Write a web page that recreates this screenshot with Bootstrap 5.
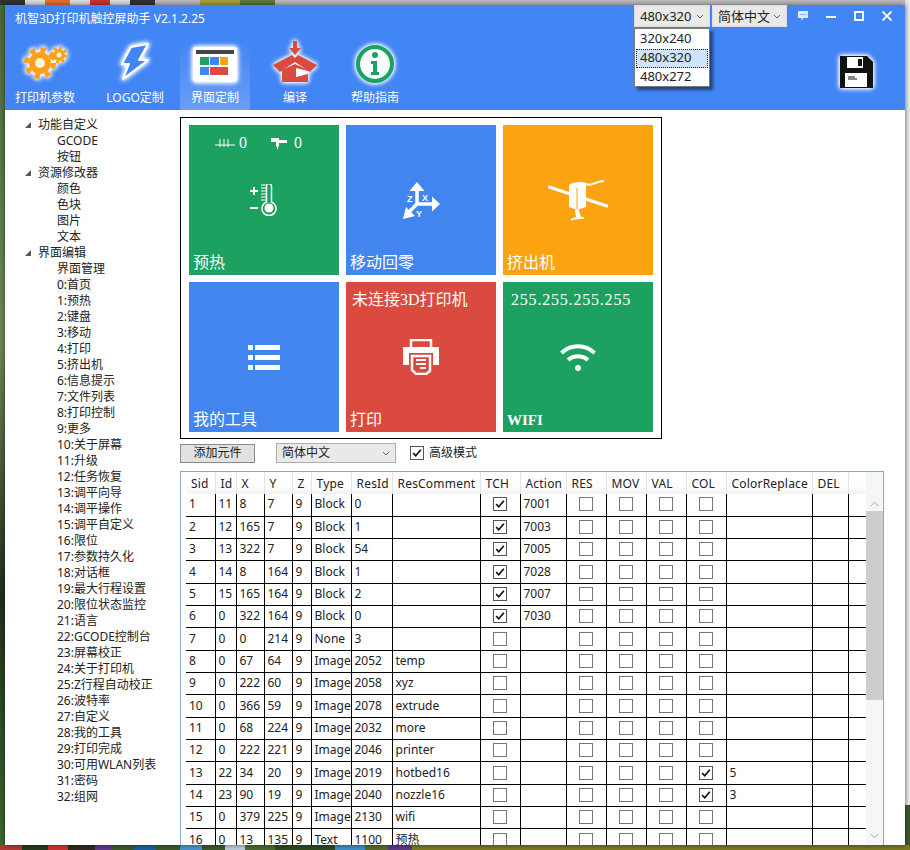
<!DOCTYPE html>
<html lang="en">
<head>
  <meta charset="UTF-8">
  <meta name="viewport" content="width=device-width, initial-scale=1">
  <title>机智3D打印机触控屏助手</title>
  <link href="https://cdn.jsdelivr.net/npm/bootstrap@5.3.2/dist/css/bootstrap.min.css" rel="stylesheet">
  <style>
    html, body { height: 850px; overflow: hidden; }
    body {
      margin: 0;
      padding: 5px;
      font-family: "Noto Sans", "Noto Sans CJK SC", sans-serif;
      font-size: 12px;
      line-height: 16px;
      color: #222;
      background-color: #3d5a2c;
      background-image:
        linear-gradient(90deg, #ddd, #eee),
        linear-gradient(90deg, #333 0 25px, #ddd 25px 45px, #e8702a 45px 70px, #ddd 70px 90px, #c33 90px 110px, #ddd 110px 130px, #333 130px 155px, #bbb 155px 200px, #a9a13c 200px 240px, #5b7a3a 240px 275px, #bbb 275px 910px),
        linear-gradient(90deg, #b03a33 0 22px, #233b1c 22px 48px, #c33 48px 68px, #32281f 68px 95px, #5d3a86 95px 112px, #3c5a2a 112px 134px, #1c5fa0 134px 156px, #3c5a2a 156px 180px, #4b93cf 180px 202px, #3a5a2a 202px 225px, #bcd 225px 245px, #4a6a30 245px 275px, #2d4a22 275px 335px, #3c90c8 335px 365px, #5a6a28 365px 388px, #5d3a86 388px 412px, #7a7a20 412px 910px),
        linear-gradient(180deg, #4a6a3a, #6f8a55 40%, #20301c 70%, #3d6a30);
      background-size: 5px 805px, 910px 5px, 910px 5px, 5px 850px;
      background-position: 905px 0, 0 0, 0 845px, 0 0;
      background-repeat: no-repeat;
    }
    .app-window {
      width: 900px;
      height: 840px;
      background: #fff;
      box-shadow: 0 0 5px rgba(0, 0, 0, .55);
    }
    .app-head { height: 105px; background: #4285f4; color: #fff; }
    .title-row { height: 35px; padding-left: 10px; }
    .app-title { font-size: 12px; margin-top: -8px; }
    .combo-btn {
      height: 22px;
      background: #e9e9e9;
      color: #222;
      border: 1px solid #dcdcdc;
      padding: 0 5px;
      font-size: 13px;
      line-height: 19px;
      position: relative;
    }
    .combo-res { width: 76px; margin-right: 2px; }
    .combo-lang { width: 75px; }
    .combo-caret { width: 8px; height: 5px; flex: none; }
    .win-btn { width: 28px; height: 22px; }
    .win-first { margin-left: 2px; }
    .res-menu.dropdown-menu {
      position: absolute;
      top: 22px;
      left: -1px;
      width: 76px;
      min-width: 0;
      height: 59px;
      padding: 1px;
      margin: 0;
      border: 1px solid #7a7a7a;
      border-radius: 0;
      font-size: 13px;
      box-shadow: 3px 3px 3px rgba(0, 0, 0, .5);
      z-index: 5;
    }
    .res-menu .dropdown-item { padding: 0 4px; height: 19px; line-height: 17px; color: #222; }
    .res-menu .dropdown-item.active {
      background: #cfe3fb;
      outline: 1px dotted #123;
      outline-offset: -1px;
    }
    .tool-row { height: 70px; }
    .tool-item { width: 80px; height: 70px; color: #fff; }
    .tool-item svg { width: 60px; height: 49px; flex: none; margin-bottom: 1px; }
    .tool-item span { line-height: 16px; }
    .tool-gap-a { margin-left: 10px; }
    .tool-gap-b { margin-left: 5px; }
    .tool-active { width: 70px; background: linear-gradient(180deg, #4285f4 0, #6a9df7 100%); }
    .tool-glow { filter: drop-shadow(0 0 2px #fff) drop-shadow(0 0 2px #fff); }
    .tool-save { width: 38px; height: 38px; margin: 13px 30px 0 auto; }

    .tree-col { width: 175px; padding-top: 7px; flex: none; }
    .tree-row { height: 16px; white-space: nowrap; position: relative; }
    .tree-top { padding-left: 33px; }
    .tree-top::before {
      content: "";
      position: absolute;
      left: 20px;
      top: 5px;
      border-style: solid;
      border-width: 0 0 6px 6px;
      border-color: transparent transparent #555 transparent;
    }
    .tree-sub { padding-left: 52px; }
    .tree-hover { display: inline-block; background: #f4f4f4; padding-right: 1px; }

    .main-col { width: 725px; padding-top: 7px; }
    .stage-box {
      width: 482px;
      height: 322px;
      border: 1px solid #000;
      padding: 7px 8px;
      display: grid;
      grid-template-columns: repeat(3, 150px);
      grid-template-rows: repeat(2, 150px);
      gap: 7px;
    }
    .stage-tile {
      display: grid;
      grid-template-rows: 36px 1fr 36px;
      color: #fff;
      font-family: "Liberation Serif", "Noto Sans CJK SC", serif;
      font-size: 16px;
      line-height: 16px;
    }
    .tile-green { background: #1ca161; }
    .tile-blue { background: #4285ef; }
    .tile-orange { background: #fca311; }
    .tile-red { background: #da4a3e; }
    .tile-top { padding-left: 6px; }
    .tile-ip { padding-left: 8px; letter-spacing: .8px; }
    .tile-mid { display: flex; align-items: center; justify-content: center; }
    .tile-label { align-self: end; padding: 0 0 4px 4px; }
    .tile-mono { font-size: 15px; font-weight: 700; }
    .tile-temp { padding-left: 26px; }
    .temp-bed { margin-right: 3px; }
    .temp-nozzle { margin: 0 7px 0 24px; }

    .ctrl-row { height: 20px; margin-top: 4px; }
    .add-btn {
      width: 75px;
      height: 19px;
      background: #e1e1e1;
      border: 1px solid #8a8a8a;
      color: #222;
      font-size: 12px;
      line-height: 16px;
      padding: 0;
    }
    .lang-select {
      width: 120px;
      height: 20px;
      margin-left: 21px;
      background: #e9e9e9;
      border: 1px solid #adadad;
      padding: 0 5px;
      font-size: 12px;
    }
    .mode-box { margin-left: 14px; }
    .mode-box span { margin-left: 5px; }
    .wf-check.form-check-input {
      width: 14px;
      height: 14px;
      margin: 0;
      border: 1px solid #777;
      border-radius: 0;
      background-color: #fff;
      flex: none;
      display: block;
    }
    .wf-check.form-check-input:checked {
      background-color: #fff;
      border-color: #555;
      background-image: url("data:image/svg+xml,%3csvg xmlns='http://www.w3.org/2000/svg' viewBox='0 0 14 14'%3e%3cpath fill='none' stroke='%23111' stroke-width='2' d='M2.5 7l3 3.2 6-7'/%3e%3c/svg%3e");
    }

    .grid-box {
      width: 704px;
      height: 374px;
      margin-top: 8px;
      border: 1px solid #8fa6bd;
      border-bottom: 0;
      padding-left: 5px;
      overflow: hidden;
      position: relative;
    }
    .grid-table.table {
      table-layout: fixed;
      width: 680px;
      margin: 0;
      font-size: 12px;
      line-height: 16px;
      color: #222;
    }
    .grid-table th, .grid-table td {
      padding: 0 0 1px 3px;
      white-space: nowrap;
      overflow: hidden;
      border: 0;
      border-right: 1px solid #000;
      border-bottom: 1px solid #000;
      height: 22.33px;
      font-weight: 400;
      vertical-align: middle;
    }
    .grid-table thead th {
      border-right: 1px solid #e4e4e4;
      border-bottom: 0;
      height: 22px;
      padding: 1px 0 0 5px;
      background: linear-gradient(180deg, #fff 60%, #f3f3f3);
      letter-spacing: .2px;
    }
    .grid-table td.cell-check { padding: 0 1px 1px 0; }
    .grid-table td.cell-check input { margin: 0 auto; }
    .grid-scroll {
      position: absolute;
      top: 0;
      right: 0;
      width: 17px;
      height: 100%;
      background: #f5f6f8;
    }
    .scroll-thumb { position: absolute; top: 39px; left: 0; width: 100%; height: 189px; background: #cdcdcd; }
    .scroll-arrow { position: absolute; left: 4px; width: 9px; height: 6px; }
    .arrow-up { top: 29px; }
    .arrow-down { bottom: 6px; }
  </style>
</head>
<body>

  <div class="app-window d-flex flex-column">
    <div class="app-head">
      <div class="title-row d-flex align-items-start">
        <div class="app-title align-self-center">机智3D打印机触控屏助手 V2.1.2.25</div>
        <div class="ms-auto d-flex align-items-center">
          <div class="combo-btn combo-res d-flex align-items-center justify-content-between">
            480x320
            <svg class="combo-caret" viewBox="0 0 8 5"><path d="M1 1l3 3 3-3" fill="none" stroke="#666"/></svg>
            <div class="dropdown-menu show res-menu">
              <a class="dropdown-item" href="#">320x240</a>
              <a class="dropdown-item active" href="#">480x320</a>
              <a class="dropdown-item" href="#">480x272</a>
            </div>
          </div>
          <div class="combo-btn combo-lang d-flex align-items-center justify-content-between">
            简体中文
            <svg class="combo-caret" viewBox="0 0 8 5"><path d="M1 1l3 3 3-3" fill="none" stroke="#666"/></svg>
          </div>
          <div class="win-btn win-first d-flex align-items-center justify-content-center">
            <svg width="12" height="12" viewBox="0 0 12 12"><path d="M1 1h10v7H6.500L4.500 11V8H1z" fill="#dce8fd"/><path d="M3.500 4.500h1M5.500 4.500h1M7.500 4.500h1" stroke="#4285f4"/></svg>
          </div>
          <div class="win-btn d-flex align-items-center justify-content-center">
            <svg width="10" height="10" viewBox="0 0 10 10"><path d="M0 6h10" stroke="#fff" stroke-width="2"/></svg>
          </div>
          <div class="win-btn d-flex align-items-center justify-content-center">
            <svg width="10" height="10" viewBox="0 0 10 10"><rect x="1" y="1" width="8" height="8" fill="none" stroke="#fff" stroke-width="2"/></svg>
          </div>
          <div class="win-btn me-1 d-flex align-items-center justify-content-center">
            <svg width="10" height="10" viewBox="0 0 10 10"><path d="M.5.5l9 9M9.500.5l-9 9" stroke="#fff" stroke-width="1.800"/></svg>
          </div>
        </div>
      </div>

      <div class="tool-row d-flex">
        <div class="tool-item d-flex flex-column align-items-center">
          <svg class="tool-glow" viewBox="0 0 60 49">
            <circle cx="25" cy="23" r="11" fill="#ff9f1a"/>
            <circle cx="25" cy="23" r="13.500" fill="none" stroke="#ff9f1a" stroke-width="5" stroke-dasharray="5.300 5.300"/>
            <circle cx="25" cy="23" r="5" fill="#fff3dc"/>
            <circle cx="44" cy="15" r="6" fill="#ff9f1a"/>
            <circle cx="44" cy="15" r="7" fill="none" stroke="#ff9f1a" stroke-width="3" stroke-dasharray="2.750 2.750"/>
            <circle cx="44" cy="15" r="2.500" fill="#fff3dc"/>
          </svg>
          <span>打印机参数</span>
        </div>
        <div class="tool-item tool-gap-a d-flex flex-column align-items-center">
          <svg class="tool-glow" viewBox="0 0 60 49">
            <path d="M26 7L43 4 34 20h9L18 39l6-15h-7z" fill="#4285f4" stroke="#fff" stroke-width="2" stroke-linejoin="round"/>
          </svg>
          <span>LOGO定制</span>
        </div>
        <div class="tool-item tool-active tool-gap-b d-flex flex-column align-items-center">
          <svg class="tool-glow" viewBox="0 0 60 49">
            <rect x="8" y="7" width="44" height="35" rx="3" fill="#fff"/>
            <rect x="11" y="10" width="38" height="4" fill="#444"/>
            <rect x="15" y="17" width="9" height="8" fill="#1ca161"/>
            <rect x="25" y="17" width="9" height="8" fill="#4285f4"/>
            <rect x="35" y="17" width="8" height="8" fill="#fca311"/>
            <rect x="15" y="27" width="9" height="8" fill="#4285f4"/>
            <rect x="25" y="27" width="18" height="8" fill="#da4a3e"/>
          </svg>
          <span>界面定制</span>
        </div>
        <div class="tool-item tool-gap-b d-flex flex-column align-items-center">
          <svg class="tool-glow" viewBox="0 0 60 49">
            <path d="M28 1h4v7h4l-6 7-6-7h4z" fill="#da4a3e"/>
            <path d="M8 25l19-10 3 3v4L15 32z" fill="#da4a3e"/>
            <path d="M52 25L33 15l-3 3v4l15 10z" fill="#da4a3e"/>
            <path d="M17 30l13-6 13 6v12H17z" fill="#da4a3e"/>
            <path d="M31 28l12 3v3l-12 3z" fill="#fff"/>
          </svg>
          <span>编译</span>
        </div>
        <div class="tool-item d-flex flex-column align-items-center">
          <svg class="tool-glow" viewBox="0 0 60 49">
            <circle cx="30" cy="24" r="17" fill="#fff" stroke="#1ca161" stroke-width="4"/>
            <circle cx="30" cy="15" r="3" fill="#1ca161"/>
            <path d="M26 21h6v11h2v3h-8v-3h2v-8h-2z" fill="#1ca161"/>
          </svg>
          <span>帮助指南</span>
        </div>
        <svg class="tool-save tool-glow" viewBox="0 0 38 38">
          <path d="M3 3h27l6 6v26H3z" fill="#111"/>
          <rect x="10" y="4" width="16" height="11" fill="#fff"/>
          <rect x="21" y="6" width="4" height="7" fill="#111"/>
          <rect x="8" y="20" width="22" height="14" fill="#fff"/>
          <path d="M11 24h7M11 26h9" stroke="#111"/>
        </svg>
      </div>
    </div>

    <div class="d-flex flex-grow-1">
      <div class="tree-col" id="treeList"></div>

      <div class="main-col">
        <div class="stage-box">
          <div class="stage-tile tile-green">
            <div class="tile-temp d-flex align-items-center">
              <svg class="temp-bed" width="21" height="10" viewBox="0 0 21 10"><path d="M0 7h20M5 1v8M9 1v8M13 1v8" stroke="#fff"/></svg>
              <span>0</span>
              <svg class="temp-nozzle" width="16" height="14" viewBox="0 0 16 14"><path d="M0 2h8v2h8v3H8v3l-1 1v2H6v-2L5 10V6H0z" fill="#fff"/></svg>
              <span>0</span>
            </div>
            <div class="tile-mid">
              <svg width="28" height="32" viewBox="0 0 28 32">
                <path d="M0 7h8M4 3v8M0 24h8" stroke="#fff" stroke-width="2"/>
                <path d="M11 1h5M11 4h5M11 7h5M11 10h5M11 13h5M11 16h5" stroke="#fff"/>
                <path d="M16.500 1a2.500 2.500 0 0 1 5 0v16a7 7 0 1 1-5 0z" fill="none" stroke="#fff" stroke-width="1.500" transform="translate(0 1)"/>
                <circle cx="19" cy="24" r="4.500" fill="#fff"/>
              </svg>
            </div>
            <div class="tile-label">预热</div>
          </div>
          <div class="stage-tile tile-blue">
            <div></div>
            <div class="tile-mid">
              <svg width="37" height="37" viewBox="0 0 37 37">
                <path d="M14 22V6M14 22h17M14 22L4 32" stroke="#fff" stroke-width="3.500" fill="none"/>
                <path d="M14 0l7.500 9h-15zM37 22l-8 7.500v-15zM0 37l3-12 9 9z" fill="#fff"/>
                <text x="4" y="20" font-size="9" font-weight="700" fill="#fff" font-family="Liberation Sans">Z</text>
                <text x="19" y="19" font-size="9" font-weight="700" fill="#fff" font-family="Liberation Sans">X</text>
                <text x="13" y="35" font-size="9" font-weight="700" fill="#fff" font-family="Liberation Sans">Y</text>
              </svg>
            </div>
            <div class="tile-label">移动回零</div>
          </div>
          <div class="stage-tile tile-orange">
            <div></div>
            <div class="tile-mid">
              <svg width="60" height="42" viewBox="0 0 60 42">
                <path d="M1 8l58 19" stroke="#fff" stroke-width="3" stroke-linecap="round"/>
                <path d="M21 6c3-3 12-4 17-2v24l-9 3-8-3z" fill="#fff"/>
                <path d="M38 5c6 3 10-3 18-3" stroke="#fff" stroke-width="2" fill="none"/>
                <path d="M27 31h4l1 4 1 3h-5z" fill="#fff"/>
                <path d="M23 41c4-3 9-2 13-2" stroke="#fff" stroke-width="2" fill="none"/>
                <path d="M29 9v21" stroke="#fca311"/>
              </svg>
            </div>
            <div class="tile-label">挤出机</div>
          </div>
          <div class="stage-tile tile-blue">
            <div></div>
            <div class="tile-mid">
              <svg width="32" height="25" viewBox="0 0 32 25" fill="#fff">
                <rect y="0" width="5" height="5"/><rect x="7" y="0" width="25" height="5"/>
                <rect y="10" width="5" height="5"/><rect x="7" y="10" width="25" height="5"/>
                <rect y="20" width="5" height="5"/><rect x="7" y="20" width="25" height="5"/>
              </svg>
            </div>
            <div class="tile-label">我的工具</div>
          </div>
          <div class="stage-tile tile-red">
            <div class="tile-top d-flex align-items-center">未连接3D打印机</div>
            <div class="tile-mid">
              <svg width="36" height="36" viewBox="0 0 36 36">
                <path d="M8 8V1h20v7" fill="none" stroke="#fff" stroke-width="2.500"/>
                <path d="M0 8h36v18h-6V14H6v12H0z" fill="#fff"/>
                <path d="M9 17h18v15l-4 3H13l-4-4z" fill="none" stroke="#fff" stroke-width="2.500"/>
                <path d="M13 21h10M13 25h10M17 29h6" stroke="#fff" stroke-width="2"/>
              </svg>
            </div>
            <div class="tile-label">打印</div>
          </div>
          <div class="stage-tile tile-green">
            <div class="tile-ip d-flex align-items-center">255.255.255.255</div>
            <div class="tile-mid">
              <svg width="36" height="28" viewBox="0 0 36 28" fill="none" stroke="#fff" stroke-width="4">
                <path d="M1.500 10c9-9 24-9 33 0"/>
                <path d="M8 17c6-5 14-5 20 0"/>
                <circle cx="18" cy="25" r="3" fill="#fff" stroke="none"/>
              </svg>
            </div>
            <div class="tile-label tile-mono">WIFI</div>
          </div>
        </div>

        <div class="ctrl-row d-flex align-items-center">
          <button class="add-btn" type="button">添加元件</button>
          <div class="lang-select d-flex align-items-center justify-content-between">
            简体中文
            <svg class="combo-caret" viewBox="0 0 8 5"><path d="M1 1l3 3 3-3" fill="none" stroke="#666"/></svg>
          </div>
          <div class="mode-box d-flex align-items-center">
            <input class="form-check-input wf-check" type="checkbox" checked>
            <span>高级模式</span>
          </div>
        </div>

        <div class="grid-box">
          <table class="table grid-table">
            <colgroup id="gridCols"></colgroup>
            <thead><tr id="gridHead"></tr></thead>
            <tbody id="gridBody"></tbody>
          </table>
          <div class="grid-scroll">
            <svg class="scroll-arrow arrow-up" viewBox="0 0 9 6"><path d="M1 5l3.500-4L8 5" fill="none" stroke="#aaa"/></svg>
            <div class="scroll-thumb"></div>
            <svg class="scroll-arrow arrow-down" viewBox="0 0 9 6"><path d="M1 1l3.500 4L8 1" fill="none" stroke="#aaa"/></svg>
          </div>
        </div>
      </div>
    </div>
  </div>

  <script src="https://cdn.jsdelivr.net/npm/bootstrap@5.3.2/dist/js/bootstrap.bundle.min.js"></script>

  <script>
    const tree = [
      ['功能自定义', ['GCODE', '按钮']],
      ['资源修改器', ['颜色', '色块', '图片', '文本']],
      ['界面编辑', ['界面管理', '0:首页', '1:预热', '2:键盘', '3:移动', '4:打印', '5:挤出机', '6:信息提示',
        '7:文件列表', '8:打印控制', '9:更多', '10:关于屏幕', '11:升级', '12:任务恢复', '13:调平向导', '14:调平操作',
        '15:调平自定义', '16:限位', '17:参数持久化', '18:对话框', '19:最大行程设置', '20:限位状态监控', '21:语言',
        '22:GCODE控制台', '23:屏幕校正', '24:关于打印机', '25:Z行程自动校正', '26:波特率', '27:自定义', '28:我的工具',
        '29:打印完成', '30:可用WLAN列表', '31:密码', '32:组网']]
    ];

    let treeHtml = '';
    tree.forEach(group => {
      treeHtml += `<div class="tree-row tree-top">${group[0]}</div>`;
      group[1].forEach(name => {
        const label = name === '0:首页' ? `<span class="tree-hover">${name}</span>` : name;
        treeHtml += `<div class="tree-row tree-sub">${label}</div>`;
      });
    });
    document.getElementById('treeList').innerHTML = treeHtml;

    const cols = [['Sid', 29], ['Id', 21], ['X', 28], ['Y', 28], ['Z', 19], ['Type', 40], ['ResId', 41], ['ResComment', 88],
      ['TCH', 40], ['Action', 46], ['RES', 40], ['MOV', 40], ['VAL', 40], ['COL', 40], ['ColorReplace', 86], ['DEL', 36], ['', 18]];
    document.getElementById('gridCols').innerHTML = cols.map(c => `<col style="width:${c[1]}px">`).join('');
    document.getElementById('gridHead').innerHTML = cols.map(c => `<th>${c[0]}</th>`).join('');

    // sid, id, x, y, z, type, resId, comment, tch, action, colorChecked, colorReplace
    const rows = [
      [1, 11, 8, 7, 9, 'Block', 0, '', 1, 7001, 0, ''],
      [2, 12, 165, 7, 9, 'Block', 1, '', 1, 7003, 0, ''],
      [3, 13, 322, 7, 9, 'Block', 54, '', 1, 7005, 0, ''],
      [4, 14, 8, 164, 9, 'Block', 1, '', 1, 7028, 0, ''],
      [5, 15, 165, 164, 9, 'Block', 2, '', 1, 7007, 0, ''],
      [6, 0, 322, 164, 9, 'Block', 0, '', 1, 7030, 0, ''],
      [7, 0, 0, 214, 9, 'None', 3, '', 0, '', 0, ''],
      [8, 0, 67, 64, 9, 'Image', 2052, 'temp', 0, '', 0, ''],
      [9, 0, 222, 60, 9, 'Image', 2058, 'xyz', 0, '', 0, ''],
      [10, 0, 366, 59, 9, 'Image', 2078, 'extrude', 0, '', 0, ''],
      [11, 0, 68, 224, 9, 'Image', 2032, 'more', 0, '', 0, ''],
      [12, 0, 222, 221, 9, 'Image', 2046, 'printer', 0, '', 0, ''],
      [13, 22, 34, 20, 9, 'Image', 2019, 'hotbed16', 0, '', 1, 5],
      [14, 23, 90, 19, 9, 'Image', 2040, 'nozzle16', 0, '', 1, 3],
      [15, 0, 379, 225, 9, 'Image', 2130, 'wifi', 0, '', 0, ''],
      [16, 0, 13, 135, 9, 'Text', 1100, '预热', 0, '', 0, '']
    ];

    function checkCell(on) {
      return `<td class="cell-check"><input class="form-check-input wf-check" type="checkbox"${on ? ' checked' : ''}></td>`;
    }

    document.getElementById('gridBody').innerHTML = rows.map(r => {
      let html = '<tr>';
      r.slice(0, 8).forEach(v => { html += `<td>${v}</td>`; });
      html += checkCell(r[8]) + `<td>${r[9]}</td>`;
      html += checkCell(0) + checkCell(0) + checkCell(0) + checkCell(r[10]);
      html += `<td>${r[11]}</td><td></td><td></td></tr>`;
      return html;
    }).join('');
  </script>

</body>
</html>
